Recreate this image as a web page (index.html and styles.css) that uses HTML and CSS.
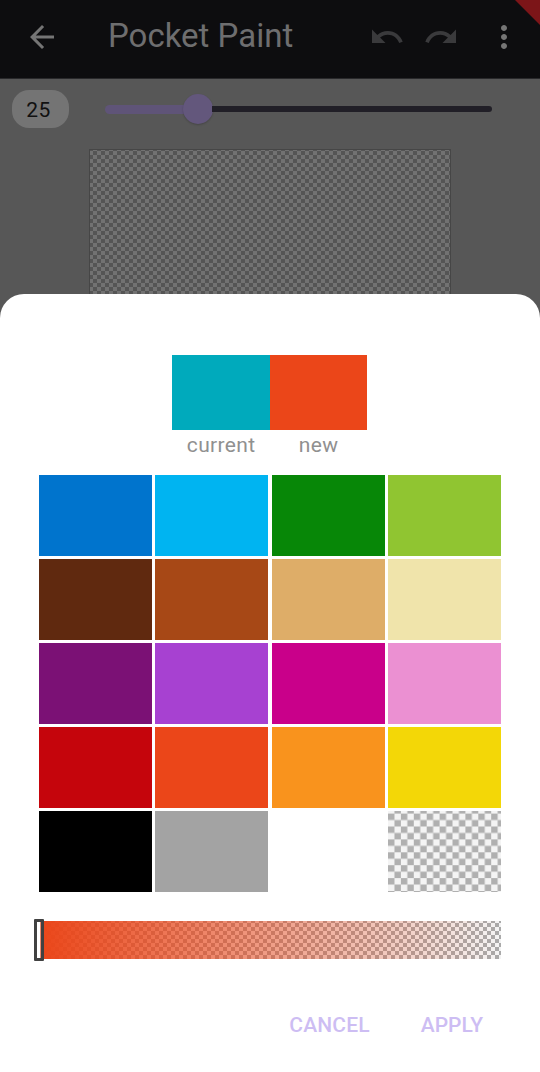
FILE: index.html
```html
<!DOCTYPE html>
<html lang="en">
<head>
<meta charset="utf-8">
<title>Pocket Paint</title>
<link rel="stylesheet" href="styles.css">
</head>
<body>
<div class="screen">
  <header class="bar">
    <svg class="icon back" viewBox="0 0 24 24"><path d="M20 11H7.83l5.59-5.59L12 4l-8 8 8 8 1.41-1.41L7.83 13H20v-2z"/></svg>
    <h1 class="title">Pocket Paint</h1>
    <svg class="icon undo" viewBox="0 0 24 24"><path d="M12.5 8c-2.65 0-5.05.99-6.9 2.6L2 7v9h9l-3.62-3.62c1.39-1.16 3.16-1.88 5.12-1.88 3.54 0 6.55 2.31 7.6 5.5l2.37-.78C21.08 11.03 17.15 8 12.5 8z"/></svg>
    <svg class="icon redo" viewBox="0 0 24 24"><path d="M18.4 10.6C16.55 8.99 14.15 8 11.5 8c-4.65 0-8.58 3.03-9.96 7.22L3.9 16c1.05-3.19 4.05-5.5 7.6-5.5 1.95 0 3.73.72 5.12 1.88L13 16h9V7l-3.6 3.6z"/></svg>
    <svg class="icon more" viewBox="0 0 24 24"><path d="M12 8c1.1 0 2-.9 2-2s-.9-2-2-2-2 .9-2 2 .9 2 2 2zm0 2c-1.1 0-2 .9-2 2s.9 2 2 2 2-.9 2-2-.9-2-2-2zm0 6c-1.1 0-2 .9-2 2s.9 2 2 2 2-.9 2-2-.9-2-2-2z"/></svg>
    <span class="ribbon"></span>
  </header>
  <div class="stroke">
    <span class="size">25</span>
    <div class="track"><span class="filled"></span><span class="thumb"></span><span class="rest"></span></div>
  </div>
  <div class="canvas"></div>
  <main class="sheet">
    <div class="compare">
      <div class="sample"><div class="chip teal"></div><span>current</span></div>
      <div class="sample"><div class="chip vermilion"></div><span>new</span></div>
    </div>
    <div class="palette">
      <i class="blue"></i><i class="sky"></i><i class="green"></i><i class="lime"></i>
      <i class="brown"></i><i class="sienna"></i><i class="tan"></i><i class="cream"></i>
      <i class="purple"></i><i class="violet"></i><i class="magenta"></i><i class="pink"></i>
      <i class="red"></i><i class="vermilion"></i><i class="orange"></i><i class="yellow"></i>
      <i class="black"></i><i class="gray"></i><i class="white"></i>
      <svg class="clear" viewBox="0 0 113 81">
        <defs><pattern id="check" y="2.6" width="12.9" height="12.9" patternUnits="userSpaceOnUse"><path class="dark" d="M0 0h6.45v12.9h6.45V6.45H0z"/></pattern></defs>
        <rect width="113" height="81" fill="url(#check)"/>
      </svg>
    </div>
    <div class="alpha"><span class="handle"></span></div>
    <div class="actions"><span class="cancel">CANCEL</span><span>APPLY</span></div>
  </main>
</div>
</body>
</html>
```
FILE: styles.css
```css
* { box-sizing: border-box; }
body { margin: 0; font-family: Roboto, sans-serif; }
.screen { width: 540px; height: 1072px; background: #575757; display: flex; flex-direction: column; overflow: hidden; }

.bar { position: relative; flex: none; height: 79px; padding: 0 18px 5px 24px; display: flex; align-items: center; background: #0d0d0f; border-bottom: 1px solid #29292b; }
.icon { flex: none; width: 36px; height: 36px; fill: #757575; }
.title { margin: 0 auto 2px 48px; font-size: 33px; line-height: 40px; font-weight: 400; color: #6e6e6f; white-space: nowrap; }
.undo, .redo { fill: #3a3a3c; }
.redo { margin-left: 18px; }
.more { margin-left: 27px; }
.ribbon { position: absolute; top: 0; right: 0; width: 25px; height: 25px; background: #7c1518; clip-path: polygon(0 0, 100% 0, 100% 100%); }

.stroke { flex: none; height: 70px; padding: 11px 48px 0 12px; display: flex; align-items: flex-start; }
.size { width: 57px; height: 38px; border-radius: 17px; background: #747474; color: #111; font-size: 21px; line-height: 40px; letter-spacing: 0.5px; text-align: center; padding-right: 4px; }
.track { flex: 1; height: 38px; margin-left: 36px; display: flex; align-items: center; }
.filled { width: 80px; height: 9px; border-radius: 5px 0 0 5px; background: #5f5478; }
.thumb { width: 30px; height: 30px; margin-left: -2px; border-radius: 50%; background: #63577c; box-shadow: 0 1px 2px #0003; }
.rest { flex: 1; height: 6px; margin-left: -1px; border-radius: 0 3px 3px 0; background: #211f27; }

.canvas { flex: none; width: 362px; height: 145px; margin-left: 89px; border: 1px solid #464646; border-bottom: 0; background: repeating-conic-gradient(#727272 0 25%, #555 0 50%) 3px 1px / 8px 8px; }

.sheet { flex: 1; padding: 61px 39px 0; background: #fff; border-radius: 24px 24px 0 0; display: flex; flex-direction: column; }
.compare { display: flex; height: 120px; padding-left: 133.4px; }
.sample { width: 97.5px; text-align: center; color: #909090; font-size: 21px; line-height: 30px; letter-spacing: 0.35px; }
.chip { height: 75px; }
.palette { display: grid; grid-template-columns: repeat(4, 113px); grid-auto-rows: 81px; gap: 3px 3.4px; }
.teal { background: #00aabc; }
.blue { background: #0074cd; }
.sky { background: #00b4f1; }
.green { background: #078707; }
.lime { background: #90c531; }
.brown { background: #60290f; }
.sienna { background: #a74816; }
.tan { background: #dead68; }
.cream { background: #f0e4ab; }
.purple { background: #7b1175; }
.violet { background: #a741d1; }
.magenta { background: #c9008a; }
.pink { background: #eb90d2; }
.red { background: #c5050c; }
.vermilion { background: #eb4619; }
.orange { background: #f9931d; }
.yellow { background: #f3d707; }
.black { background: #000; }
.gray { background: #a3a3a3; }
.white { background: #fff; }
.clear { display: block; width: 113px; height: 81px; background: #f4f4f4; }
.dark { fill: #b0b0b0; }

.alpha { position: relative; height: 38px; margin-top: 29px; background: linear-gradient(90deg, #eb4619, #eb461900), repeating-conic-gradient(#f4f4f4 0 25%, #aaa 0 50%) 0 2px / 8px 8px; }
.handle { position: absolute; left: -5px; top: -2px; width: 10px; height: 42px; border: 3px solid #414141; box-shadow: inset -1px 0 #eb8a70; background: #fff; border-radius: 1px; }

.actions { margin-top: 51px; padding-right: 18px; display: flex; justify-content: flex-end; gap: 51px; color: #cdbdf3; font-size: 21px; line-height: 30px; font-weight: 500; }
.cancel { letter-spacing: 0.15px; }
```
